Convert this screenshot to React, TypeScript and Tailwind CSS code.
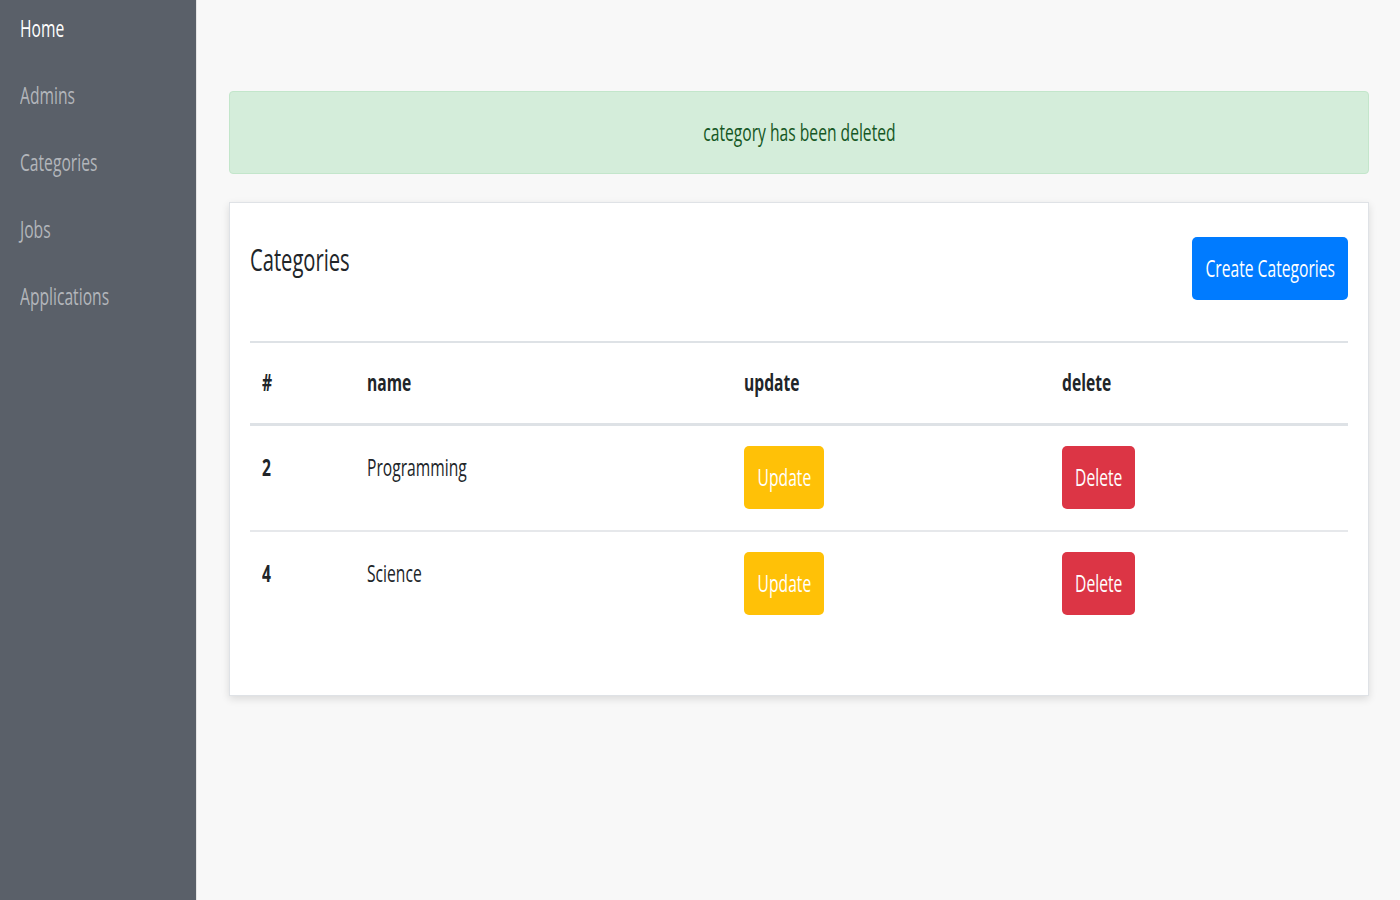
import React from "react";

// narrow text, the reference renders squeezed glyphs
function Sq({
  children,
  className = "scale-x-[0.68]",
  center = false,
}: {
  children: React.ReactNode;
  className?: string;
  center?: boolean;
}) {
  return (
    <span
      className={`inline-block whitespace-nowrap ${center ? "origin-center" : "origin-left"} ${className}`}
    >
      {children}
    </span>
  );
}

const navItems = ["Home", "Admins", "Categories", "Jobs", "Applications"];

const rows = [
  { id: 2, name: "Programming" },
  { id: 4, name: "Science" },
];

export default function App() {
  return (
    <div
      className="flex h-[900px] w-[1400px] overflow-hidden bg-[#f8f8f8]"
      style={{ fontFamily: '"Open Sans", "Noto Sans", sans-serif' }}
    >
      {/* Sidebar */}
      <aside className="w-[197px] shrink-0 bg-[#5a6069] border-r border-[#e4e4e4]">
        <nav className="flex flex-col gap-[11px] pl-5">
          {navItems.map((item, i) => (
            <a
              key={item}
              href="#"
              className={`flex h-14 items-center text-[23px] ${i === 0 ? "text-white" : "text-[#b3b6bb]"}`}
            >
              <Sq>{item}</Sq>
            </a>
          ))}
        </nav>
      </aside>

      {/* Main */}
      <main className="flex-1 pl-[32px] pr-[31px] pt-[91px]">
        <div className="flex h-[83px] items-center justify-center rounded border border-[#c3e6cb] bg-[#d4edda] text-[23px] text-[#155724]">
          <Sq center>category has been deleted</Sq>
        </div>

        <div className="mt-[28px] border border-[#dfe2e6] bg-white px-[20px] pb-[59px] pt-[34px] shadow-[0_3px_8px_rgba(0,0,0,0.12)]">
          <div className="flex h-[63px] items-center justify-between">
            <h2 className="-mt-[18px] text-[31px] leading-none text-[#212529]">
              <Sq className="scale-x-[0.65]">Categories</Sq>
            </h2>
            <button className="flex h-[63px] w-[156px] items-center justify-center rounded-[5px] bg-[#007bff] text-[23px] text-white">
              <Sq center>Create Categories</Sq>
            </button>
          </div>

          <div className="mt-[41px] text-[23px] text-[#212529]">
            <div className="grid grid-cols-[105px_377px_318px_1fr] border-t-2 border-b-[3px] border-[#dee2e6] pb-[20px] pt-[18px] font-bold">
              <div className="pl-3 leading-[42px]"><Sq>#</Sq></div>
              <div className="pl-3 leading-[42px]"><Sq>name</Sq></div>
              <div className="pl-[12px] leading-[42px]"><Sq>update</Sq></div>
              <div className="pl-[12px] leading-[42px]"><Sq>delete</Sq></div>
            </div>
            {rows.map((r, i) => (
              <div
                key={r.id}
                className={`grid grid-cols-[105px_377px_318px_1fr] pb-[21px] pt-[20px] ${i > 0 ? "border-t-2 border-[#e6e8eb]" : ""}`}
              >
                <div className="pl-3 font-bold leading-[42px]"><Sq>{r.id}</Sq></div>
                <div className="pl-3 leading-[42px]"><Sq>{r.name}</Sq></div>
                <div className="pl-[12px]">
                  <button className="flex h-[63px] w-[80px] items-center justify-center rounded-[5px] bg-[#ffc107] text-white">
                    <Sq center>Update</Sq>
                  </button>
                </div>
                <div className="pl-[12px]">
                  <button className="flex h-[63px] w-[73px] items-center justify-center rounded-[5px] bg-[#dc3545] text-white">
                    <Sq center>Delete</Sq>
                  </button>
                </div>
              </div>
            ))}
          </div>
        </div>
      </main>
    </div>
  );
}
